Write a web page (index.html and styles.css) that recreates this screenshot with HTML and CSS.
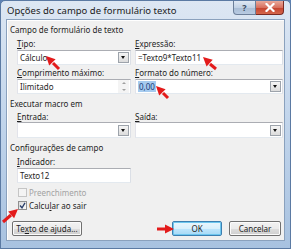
FILE: index.html
```html
<!DOCTYPE html>
<html lang="pt">
<head>
    <meta charset="UTF-8">
    <title>Opções do campo de formulário texto</title>
    <link rel="stylesheet" href="styles.css">
</head>
<body>
    <div class="window">
        <div class="titlebar">
            <div class="title">Opções do campo de formulário texto</div>
            <div class="caption-buttons">
                <div class="cap-btn help">?</div>
                <div class="cap-btn close">
                    <svg width="10" height="9" viewBox="0 0 10 9">
                        <path d="M1.5 1 L8.5 8 M8.5 1 L1.5 8" stroke="#fff" stroke-width="2.2" stroke-linecap="square"/>
                    </svg>
                </div>
            </div>
        </div>

        <div class="panel">
            <div class="section-title">Campo de formulário de texto</div>
            <div class="fields">
                <div class="label"><u>T</u>ipo:</div>
                <div class="label"><u>E</u>xpressão:</div>
                <div class="field select">
                    <span class="value">Cálculo</span>
                    <span class="drop-btn"></span>
                </div>
                <div class="field">
                    <span class="value">=Texto9*Texto11</span>
                </div>
                <div class="label"><u>C</u>omprimento máximo:</div>
                <div class="label"><u>F</u>ormato do número:</div>
                <div class="field spin">
                    <span class="value">Ilimitado</span>
                    <span class="spin-btns">
                        <span class="spin-up"></span>
                        <span class="spin-down"></span>
                    </span>
                </div>
                <div class="field select">
                    <span class="value"><span class="selected">0,00</span></span>
                    <span class="drop-btn"></span>
                </div>
            </div>

            <div class="section-title macro">Executar macro em</div>
            <div class="fields compact">
                <div class="label"><u>E</u>ntrada:</div>
                <div class="label"><u>S</u>aída:</div>
                <div class="field select tall">
                    <span class="value"></span>
                    <span class="drop-btn"></span>
                </div>
                <div class="field select tall">
                    <span class="value"></span>
                    <span class="drop-btn"></span>
                </div>
            </div>

            <div class="section-title settings">Configurações de campo</div>
            <div class="fields">
                <div class="label"><u>I</u>ndicador:</div>
                <div></div>
                <div class="field">
                    <span class="value">Texto12</span>
                </div>
            </div>

            <div class="checks">
                <div class="check disabled">
                    <span class="box"></span>
                    <span>Preenchimento</span>
                </div>
                <div class="check">
                    <span class="box">
                        <svg width="7" height="7" viewBox="0 0 7 7">
                            <path d="M1 3.5 L3 5.8 L6 0.8" fill="none" stroke="#2a3f6a" stroke-width="1.3"/>
                        </svg>
                    </span>
                    <span>Calcu<u>l</u>ar ao sair</span>
                </div>
            </div>

            <div class="buttons">
                <div class="btn help-btn">Te<u>x</u>to de ajuda...</div>
                <div class="btn-group">
                    <div class="btn default">OK</div>
                    <div class="btn">Cancelar</div>
                </div>
            </div>
        </div>

        <!-- red arrows drawn over the screenshot -->
        <svg class="arrows" width="291" height="249" viewBox="0 0 291 249">
            <g stroke="#e31b1b" stroke-width="3" fill="#e31b1b">
                <line x1="59" y1="69" x2="53" y2="63"/>
                <polygon points="46,56 55.6,59.2 49.2,65.6" stroke="none"/>
                <line x1="216" y1="69" x2="210" y2="64"/>
                <polygon points="203,57 212.7,59.8 206.6,66.4" stroke="none"/>
                <line x1="168" y1="98" x2="163" y2="93"/>
                <polygon points="156,86 165.6,89.2 159.2,95.6" stroke="none"/>
                <line x1="3" y1="222" x2="11" y2="215"/>
                <polygon points="18,209 14.1,218.3 8.2,211.5" stroke="none"/>
                <line x1="157" y1="229" x2="166" y2="229"/>
                <polygon points="174,229 165,224.5 165,233.5" stroke="none"/>
            </g>
        </svg>
    </div>
</body>
</html>
```

FILE: styles.css
```css
* {
    margin: 0;
    padding: 0;
    box-sizing: border-box;
}

body {
    width: 291px;
    height: 249px;
    overflow: hidden;
    font-family: 'Noto Sans', 'Liberation Sans', sans-serif;
    font-size: 8px;
    color: #1e1e1e;
    background-color: #5e82b4;
}

.window {
    position: relative;
    width: 291px;
    height: 249px;
    display: flex;
    flex-direction: column;
    background: linear-gradient(to bottom, #dde7f3 0%, #c3d6ec 45%, #a8c2e0 100%);
    border: 1px solid #5b7aa3;
    border-radius: 5px 5px 0 0;
}

.titlebar {
    height: 18px;
    display: flex;
    justify-content: space-between;
    align-items: flex-start;
}

.title {
    padding: 3px 0 0 6px;
    font-size: 9.5px;
    color: #1a1a1a;
}

.caption-buttons {
    display: flex;
    margin-right: 6px;
}

.cap-btn {
    height: 14px;
    display: flex;
    align-items: center;
    justify-content: center;
    border: 1px solid #6c7f99;
    border-top: none;
}

.cap-btn.help {
    width: 23px;
    border-radius: 0 0 0 4px;
    background: linear-gradient(to bottom, #dfe8f3 0%, #c2d2e5 50%, #a9bdd5 51%, #b8cbe2 100%);
    color: #3a4a60;
    font-weight: bold;
    font-size: 9px;
}

.cap-btn.close {
    width: 28px;
    border-left: none;
    border-color: #7a2a22;
    border-radius: 0 0 4px 0;
    background: linear-gradient(to bottom, #e9a99b 0%, #d8705e 50%, #c4412d 51%, #d4674c 100%);
}

.panel {
    flex: 1;
    margin: 0 5px 7px 5px;
    background-color: #f0f0f0;
    border: 1px solid #8aa1bd;
    box-shadow: inset 1px 1px 0 #ffffff;
    padding: 3px 2px 4px 2px;
    display: flex;
    flex-direction: column;
}

.section-title {
    height: 13px;
    line-height: 13px;
    padding-left: 1px;
}

.section-title.macro {
    margin-top: 3px;
}

.section-title.settings {
    margin-top: 3px;
}

.fields {
    display: grid;
    grid-template-columns: 114px 148px;
    column-gap: 4px;
    padding-left: 8px;
}

.label {
    height: 13px;
    line-height: 13px;
    margin-top: 1px;
}

.fields.compact .label {
    height: 11px;
    line-height: 11px;
}

.field {
    height: 15px;
    display: flex;
    align-items: center;
    background-color: #ffffff;
    border: 1px solid #abadb3;
    border-color: #abadb3 #dbdfe6 #e3e9ef #e2e3ea;
}

.field.tall {
    height: 16px;
}

.field .value {
    flex: 1;
    padding-left: 2px;
    white-space: nowrap;
}

.selected {
    background-color: #a6cbef;
    color: #1b3b78;
    padding: 0 1px;
}

.drop-btn {
    width: 11px;
    height: 11px;
    margin-right: 1px;
    border: 1px solid #9da3ab;
    background: linear-gradient(to bottom, #f5f5f5, #dcdcdc);
    position: relative;
}

.drop-btn::after {
    content: '';
    position: absolute;
    left: 2px;
    top: 3px;
    border-left: 2.5px solid transparent;
    border-right: 2.5px solid transparent;
    border-top: 3px solid #111;
}

.spin-btns {
    width: 11px;
    height: 13px;
    margin-right: 1px;
    display: flex;
    flex-direction: column;
    align-items: center;
    justify-content: space-around;
    background-color: #f4f4f4;
}

.spin-up {
    border-left: 2px solid transparent;
    border-right: 2px solid transparent;
    border-bottom: 2px solid #a0a0a0;
}

.spin-down {
    border-left: 2px solid transparent;
    border-right: 2px solid transparent;
    border-top: 2px solid #a0a0a0;
}

.checks {
    padding-left: 9px;
    margin-top: 5px;
    display: flex;
    flex-direction: column;
    gap: 4px;
}

.check {
    height: 9px;
    display: flex;
    align-items: center;
    gap: 2px;
    line-height: 9px;
}

.check.disabled {
    color: #a3a3a3;
}

.box {
    width: 9px;
    height: 9px;
    border: 1px solid #8f8f8f;
    background: linear-gradient(135deg, #dcdcdc, #fbfbfb);
    display: flex;
    align-items: center;
    justify-content: center;
}

.check.disabled .box {
    border-color: #c5c5c5;
    background: #f4f4f4;
}

.buttons {
    margin-top: auto;
    display: flex;
    justify-content: space-between;
    align-items: flex-end;
    padding: 0 1px 0 3px;
}

.btn-group {
    display: flex;
    gap: 7px;
}

.btn {
    height: 15px;
    width: 52px;
    display: flex;
    align-items: center;
    justify-content: center;
    border: 1px solid #707070;
    border-radius: 2px;
    background: linear-gradient(to bottom, #f2f2f2 0%, #ebebeb 50%, #dddddd 51%, #cfcfcf 100%);
    box-shadow: inset 0 0 0 1px #fbfbfb;
}

.btn.help-btn {
    width: 70px;
}

.btn.default {
    width: 50px;
    border-color: #3c7fb1;
    background: linear-gradient(to bottom, #eaf6fd 0%, #d9f0fc 50%, #bee6fd 51%, #a7d9f5 100%);
    box-shadow: inset 0 0 0 1px #6ec7ef;
}

.arrows {
    position: absolute;
    left: -1px;
    top: -1px;
    pointer-events: none;
}
```
